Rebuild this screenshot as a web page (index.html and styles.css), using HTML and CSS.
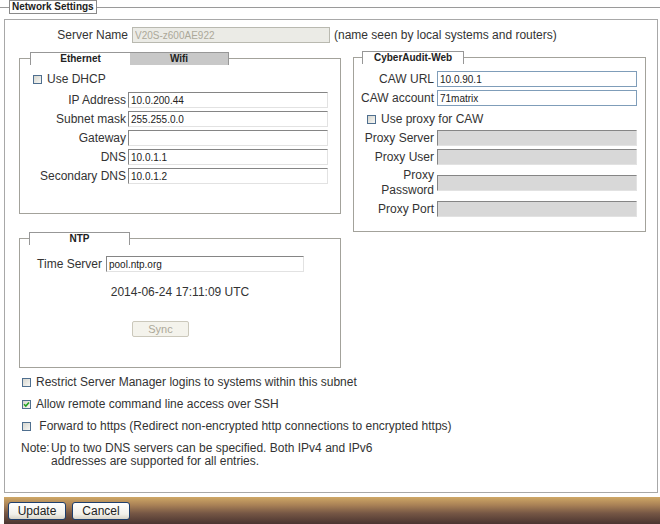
FILE: index.html
```html
<!DOCTYPE html>
<html>
<head>
<meta charset="utf-8">
<link rel="stylesheet" href="styles.css">
</head>
<body>
<fieldset class="settings">
  <legend class="settings-title">Network Settings</legend>
  <div class="panel">
    <div class="server-row">
      <label class="lbl">Server Name</label>
      <input class="txt txt-disabled" value="V20S-z600AE922" disabled>
      <span class="hint">(name seen by local systems and routers)</span>
    </div>

    <div class="columns">
      <div class="col-left">
        <fieldset class="box eth">
          <legend class="tabs"><span class="tab">Ethernet</span><span class="tab tab-off">Wifi</span></legend>
          <div class="check-row dhcp"><span class="cb"></span><span>Use DHCP</span></div>
          <div class="form-grid eth-grid">
            <label class="lbl">IP Address</label><input class="txt inset" value="10.0.200.44">
            <label class="lbl">Subnet mask</label><input class="txt inset" value="255.255.0.0">
            <label class="lbl">Gateway</label><input class="txt inset" value="">
            <label class="lbl">DNS</label><input class="txt inset" value="10.0.1.1">
            <label class="lbl">Secondary DNS</label><input class="txt inset" value="10.0.1.2">
          </div>
        </fieldset>

        <fieldset class="box ntp">
          <legend class="tabs"><span class="tab">NTP</span></legend>
          <div class="form-grid ntp-grid">
            <label class="lbl">Time Server</label><input class="txt inset" value="pool.ntp.org">
          </div>
          <div class="ntp-time">2014-06-24 17:11:09 UTC</div>
          <button class="sync" disabled>Sync</button>
        </fieldset>
      </div>

      <div class="col-right">
        <fieldset class="box caw">
          <legend class="tabs"><span class="tab tab-wide">CyberAudit-Web</span></legend>
          <div class="form-grid caw-grid">
            <label class="lbl">CAW URL</label><input class="txt xp" value="10.0.90.1">
            <label class="lbl">CAW account</label><input class="txt xp" value="71matrix">
          </div>
          <div class="check-row proxy"><span class="cb"></span><span>Use proxy for CAW</span></div>
          <div class="form-grid caw-grid proxy-grid">
            <label class="lbl">Proxy Server</label><input class="txt inset off" value="" disabled>
            <label class="lbl">Proxy User</label><input class="txt inset off" value="" disabled>
            <label class="lbl two-line">Proxy<br>Password</label><input class="txt inset off" value="" disabled>
            <label class="lbl">Proxy Port</label><input class="txt inset off" value="" disabled>
          </div>
        </fieldset>
      </div>
    </div>

    <div class="options">
      <div class="check-row"><span class="cb"></span><span>Restrict Server Manager logins to systems within this subnet</span></div>
      <div class="check-row"><span class="cb"><svg width="7" height="7" viewBox="0 0 7 7"><path d="M1 3.2 L2.8 5 L6 1.5" fill="none" stroke="#21a121" stroke-width="1.6"/></svg></span><span>Allow remote command line access over SSH</span></div>
      <div class="check-row"><span class="cb"></span><span>&nbsp;Forward to https (Redirect non-encrypted http connections to encrypted https)</span></div>
    </div>

    <div class="note">
      <span class="note-label">Note:</span>
      <span class="note-text">Up to two DNS servers can be specified. Both IPv4 and IPv6<br>addresses are supported for all entries.</span>
    </div>
  </div>
</fieldset>

<div class="bar">
  <button class="btn btn-update">Update</button>
  <button class="btn btn-cancel">Cancel</button>
</div>
</body>
</html>
```

FILE: styles.css
```css
html, body {
  margin: 0;
  padding: 0;
  background: #fff;
}

body {
  width: 660px;
  height: 524px;
  overflow: hidden;
  font-family: "Liberation Sans", Arial, sans-serif;
  font-size: 12px;
  color: #333;
}

/* outer section */
.settings {
  margin: 0;
  padding: 5px 2px 0 4px;
  border: 0;
  border-top: 1px solid #9a9a9a;
  min-width: 0;
}

.settings-title {
  margin-left: 5px;
  padding: 0 2px;
  border: 1px solid #8a8a8a;
  font-weight: bold;
  font-size: 10px;
  line-height: 12px;
  color: #222;
}

.panel {
  box-sizing: border-box;
  height: 474px;
  border: 1px solid #a8a8a8;
  background: #fff;
}

/* server name row */
.server-row {
  display: grid;
  grid-template-columns: 123px 198px auto;
  column-gap: 4px;
  align-items: center;
  margin-top: 7px;
}

.lbl {
  text-align: right;
  line-height: 14px;
  white-space: nowrap;
}

.hint {
  white-space: nowrap;
}

/* text inputs */
.txt {
  box-sizing: border-box;
  height: 16px;
  margin: 0;
  padding: 0 2px;
  font-family: "Liberation Sans", Arial, sans-serif;
  font-size: 10px;
  color: #222;
  background: #fff;
  outline: none;
}

.txt-disabled {
  border: 1px solid #b9b9b0;
  background: #ebebe6;
  color: #aca899;
}

.inset {
  border-style: solid;
  border-width: 1px;
  border-color: #858585 #e2e2e2 #e2e2e2 #858585;
}

.xp {
  border: 1px solid #7f9db9;
}

.off {
  background: #d8d8d8;
}

/* columns */
.columns {
  display: flex;
  align-items: flex-start;
  gap: 12px;
  margin: 8px 0 0 14px;
}

.col-left {
  width: 322px;
}

.col-right {
  width: 293px;
}

.box {
  margin: 0;
  padding: 0;
  border: 1px solid #a3a29b;
  min-width: 0;
}

.tabs {
  display: flex;
  padding: 0;
  border: 1px solid #979797;
  border-bottom: 0;
  background: #fff;
  font-weight: bold;
  font-size: 10px;
  line-height: 12px;
  color: #222;
}

.tab {
  width: 99px;
  text-align: center;
}

.tab-off {
  width: 98px;
  background: #c8c8c8;
}

.tab-wide {
  width: 100px;
}

.eth {
  margin-top: 1px;
}

.eth .tabs {
  margin-left: 10px;
}

.ntp .tabs {
  margin-left: 9px;
}

.caw .tabs {
  margin-left: 8px;
}

/* checkboxes */
.check-row {
  display: flex;
  align-items: center;
  gap: 5px;
  line-height: 14px;
  white-space: nowrap;
}

.cb {
  box-sizing: border-box;
  display: inline-flex;
  align-items: center;
  justify-content: center;
  width: 9px;
  height: 9px;
  border: 1px solid #4f6f8f;
  background: linear-gradient(135deg, #d6d6cf, #f7f7f4);
  flex: none;
}

.dhcp {
  margin: 7px 0 0 13px;
}

.proxy {
  margin: 6px 0 0 13px;
}

/* form grids */
.form-grid {
  display: grid;
  align-items: center;
  row-gap: 3px;
}

.eth-grid {
  grid-template-columns: 106px 200px;
  column-gap: 2px;
  margin: 6px 0 29px;
}

.caw-grid {
  grid-template-columns: 80px 200px;
  column-gap: 3px;
  margin-top: 7px;
}

.proxy-grid {
  margin: 4px 0 14px;
}

.two-line {
  line-height: 15px;
}

.ntp {
  margin-top: 18px;
}

.ntp-grid {
  grid-template-columns: 82px 198px;
  column-gap: 4px;
  margin-top: 11px;
}

.ntp-time {
  margin-top: 13px;
  line-height: 14px;
  text-align: center;
}

.sync {
  display: block;
  box-sizing: border-box;
  width: 57px;
  height: 16px;
  margin: 22px 0 30px 112px;
  padding: 0;
  border: 1px solid #cbc8bb;
  border-radius: 2px;
  background: #f4f3ec;
  font-family: "Liberation Sans", Arial, sans-serif;
  font-size: 11px;
  color: #aca899;
}

/* options */
.options {
  display: flex;
  flex-direction: column;
  gap: 8px;
  margin: 7px 0 0 17px;
}

.note {
  display: flex;
  margin: 9px 0 0 16px;
  line-height: 13px;
}

.note-label {
  width: 30px;
  flex: none;
}

/* bottom bar */
.bar {
  display: flex;
  gap: 6px;
  box-sizing: border-box;
  height: 27px;
  margin: 4px 0 0 4px;
  padding: 5px 0 0 4px;
  background: linear-gradient(#cfa866 0%, #a98156 30%, #765745 60%, #4a3430 100%);
}

.btn {
  box-sizing: border-box;
  width: 58px;
  height: 18px;
  padding: 0;
  border: 1px solid #1d3f6e;
  border-radius: 3px;
  background: linear-gradient(#ffffff, #f1f0ea 70%, #d8d3c6);
  font-family: "Liberation Sans", Arial, sans-serif;
  font-size: 12px;
  color: #222;
}
```
